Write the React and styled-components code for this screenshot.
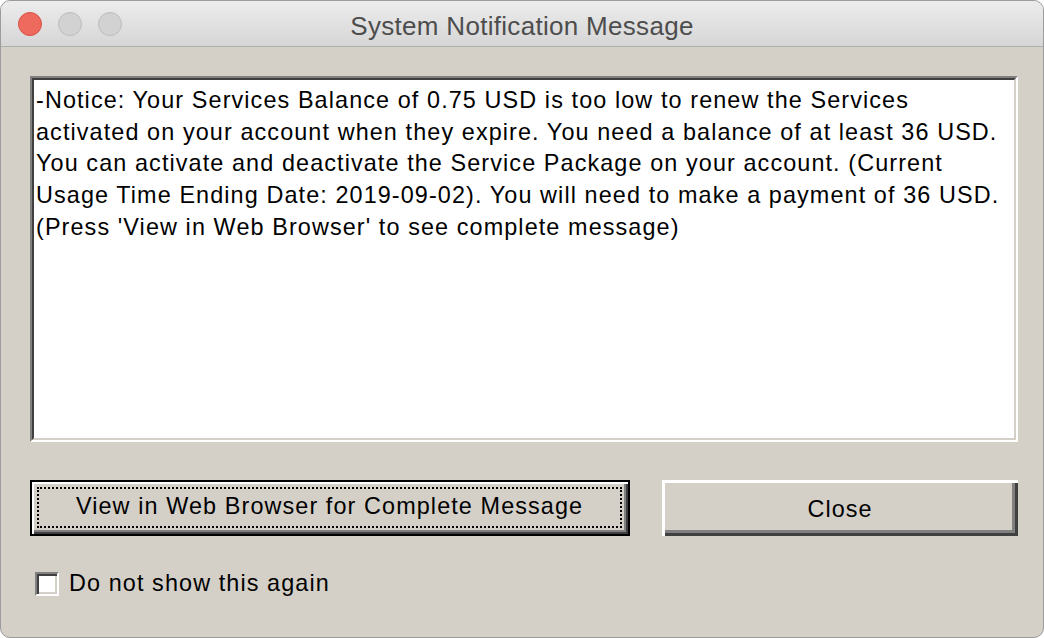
import styled, { createGlobalStyle } from 'styled-components';

const GlobalStyle = createGlobalStyle`
  html, body {
    margin: 0;
    padding: 0;
    background: #ffffff;
  }
  * {
    box-sizing: border-box;
  }
`;

const Window = styled.div`
  width: 1044px;
  height: 638px;
  display: flex;
  flex-direction: column;
  background: #d4d0c8;
  border: 1px solid #9c9c9c;
  border-radius: 10px;
  overflow: hidden;
`;

const TitleBar = styled.div`
  height: 46px;
  flex-shrink: 0;
  display: grid;
  grid-template-columns: 1fr auto 1fr;
  align-items: center;
  background: linear-gradient(#ececec, #d6d6d6);
  border-bottom: 1px solid #afafaf;
`;

const Lights = styled.div`
  display: flex;
  gap: 16px;
  padding-left: 17px;
  padding-top: 1px;
`;

const Light = styled.span`
  width: 24px;
  height: 24px;
  border-radius: 50%;
  background: ${(p) => (p.red ? '#ee6a5f' : '#d2d2d2')};
  border: 1px solid ${(p) => (p.red ? '#d85246' : '#bcbcbc')};
`;

const Title = styled.div`
  font-family: 'Liberation Sans', Arial, sans-serif;
  font-size: 26px;
  letter-spacing: 0.3px;
  color: #4d4d4d;
  padding-top: 5px;
`;

const Body = styled.div`
  flex: 1;
  padding: 29px 25px 0 29px;
  display: flex;
  flex-direction: column;
`;

const MessageFrame = styled.div`
  height: 366px;
  border: 2px solid;
  border-color: #808080 #ffffff #ffffff #808080;
`;

const MessageInner = styled.div`
  height: 100%;
  border: 2px solid;
  border-color: #404040 #d4d0c8 #d4d0c8 #404040;
  background: #ffffff;
  padding: 5px 2px 0 2px;
  font-family: 'Liberation Sans', Arial, sans-serif;
  font-size: 23.4px;
  letter-spacing: 1.1px;
  line-height: 31.7px;
  color: #000000;
  white-space: nowrap;
`;

const ButtonRow = styled.div`
  display: flex;
  gap: 32px;
  margin-top: 38px;
`;

const Button = styled.button`
  width: ${(p) => p.w}px;
  height: 56px;
  padding: 0;
  background: #d4d0c8;
  font-family: 'Liberation Sans', Arial, sans-serif;
  font-size: 23.4px;
  letter-spacing: 1.1px;
  color: #000000;
  border: ${(p) => (p.primary ? '2px solid #000000' : 'none')};
  box-shadow: ${(p) =>
    p.primary
      ? 'inset 2px 2px 0 #ffffff, inset -2px -2px 0 #404040, inset -4px -4px 0 #808080'
      : 'inset 3px 3px 0 #ffffff, inset -3px -3px 0 #404040, inset -6px -6px 0 #808080'};
  display: flex;
  align-items: center;
  justify-content: center;
  cursor: pointer;
`;

const FocusRing = styled.span`
  flex: 1;
  align-self: stretch;
  margin: 5px 6px 6px 5px;
  border: 2px dotted #000000;
  display: flex;
  align-items: center;
  justify-content: center;
  padding-bottom: 2px;
`;

const ButtonLabel = styled.span`
  padding-top: ${(p) => (p.nudge ? 2 : 0)}px;
`;

const CheckRow = styled.label`
  display: flex;
  align-items: center;
  gap: 10px;
  margin-top: 34px;
  padding-left: 5px;
  font-family: 'Liberation Sans', Arial, sans-serif;
  font-size: 23.4px;
  letter-spacing: 1.1px;
  color: #000000;
`;

const CheckBox = styled.span`
  width: 24px;
  height: 24px;
  border: 2px solid;
  border-color: #808080 #ffffff #ffffff #808080;
  box-shadow: inset 2px 2px 0 #404040, inset -2px -2px 0 #d4d0c8;
  background: #ffffff;
`;

const message =
  "-Notice: Your Services Balance of 0.75 USD is too low to renew the Services activated on your account when they expire. You need a balance of at least 36 USD. You can activate and deactivate the Service Package on your account. (Current Usage Time Ending Date: 2019-09-02). You will need to make a payment of 36 USD. (Press 'View in Web Browser' to see complete message)";

const lines = [
  '-Notice: Your Services Balance of 0.75 USD is too low to renew the Services',
  'activated on your account when they expire. You need a balance of at least 36 USD.',
  'You can activate and deactivate the Service Package on your account.  (Current',
  'Usage Time Ending Date: 2019-09-02). You will need to make a payment of 36 USD.',
  "(Press 'View in Web Browser' to see complete message)",
];

export default function App() {
  return (
    <>
      <GlobalStyle />
      <Window>
        <TitleBar>
          <Lights>
            <Light red />
            <Light />
            <Light />
          </Lights>
          <Title>System Notification Message</Title>
          <div />
        </TitleBar>
        <Body>
          <MessageFrame title={message}>
            <MessageInner>
              {lines.map((l) => (
                <div key={l}>{l}</div>
              ))}
            </MessageInner>
          </MessageFrame>
          <ButtonRow>
            <Button primary w={602}>
              <FocusRing>View in Web Browser for Complete Message</FocusRing>
            </Button>
            <Button w={357}>
              <ButtonLabel nudge>Close</ButtonLabel>
            </Button>
          </ButtonRow>
          <CheckRow>
            <CheckBox />
            Do not show this again
          </CheckRow>
        </Body>
      </Window>
    </>
  );
}
